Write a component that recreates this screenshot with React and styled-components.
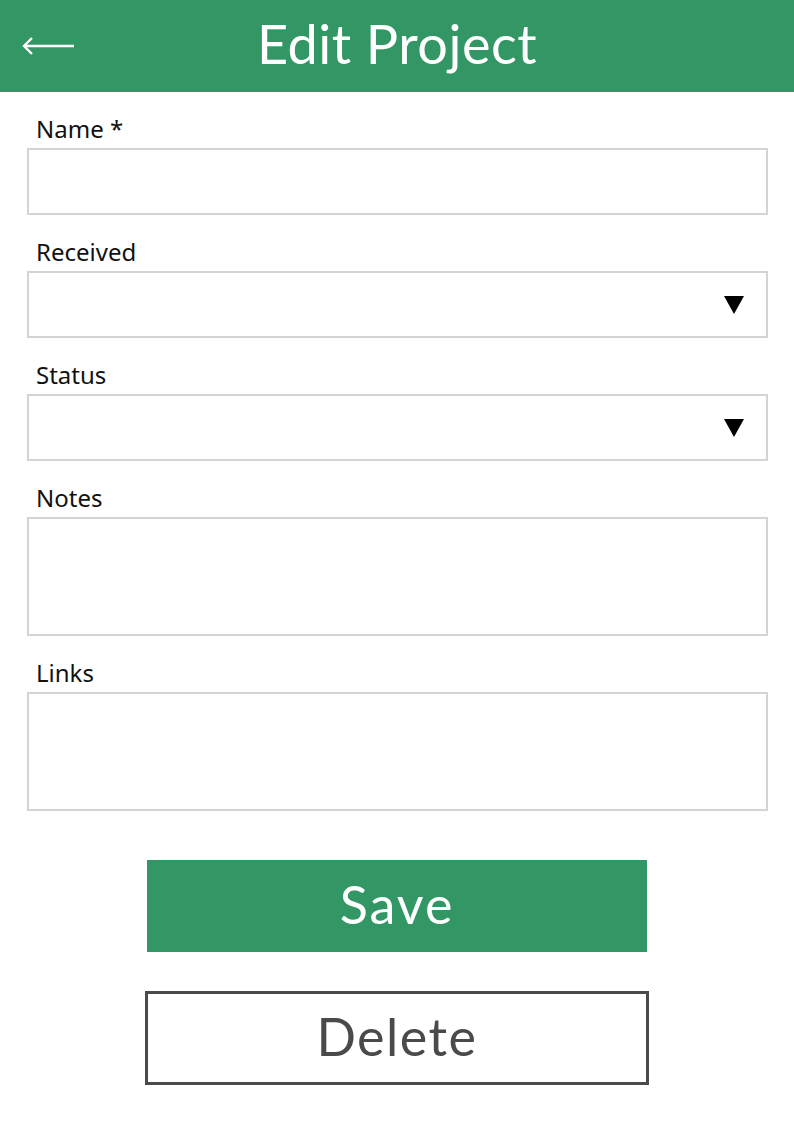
import React from 'react';
import styled, { createGlobalStyle } from 'styled-components';

const GlobalStyle = createGlobalStyle`
    body {
        margin: 0;
        background: #fff;
        font-family: Lato, "Noto Sans", sans-serif;
    }
`;

const Page = styled.div`
    width: 794px;
    min-height: 1123px;
    background: #fff;
`;

const Header = styled.header`
    height: 92px;
    background: #339765;
    display: grid;
    grid-template-columns: 100px 1fr 100px;
    align-items: center;
    color: #fff;
`;

const BackButton = styled.button`
    background: none;
    border: none;
    padding: 0 0 0 22px;
    display: flex;
    align-items: center;
    cursor: pointer;
`;

const Title = styled.h1`
    margin: 0;
    text-align: center;
    font-size: 54px;
    font-weight: 400;
    letter-spacing: 0.5px;
    line-height: 1;
    padding-bottom: 4px;
`;

const Form = styled.form`
    padding: 23px 26px 0 27px;
    display: flex;
    flex-direction: column;
    gap: 23px;
`;

const Field = styled.div`
    display: flex;
    flex-direction: column;
    gap: 5px;
`;

const Label = styled.label`
    font-family: "Noto Sans", Lato, sans-serif;
    font-size: 24px;
    line-height: 28px;
    color: #111;
    padding-left: 9px;
`;

const Box = styled.div`
    box-sizing: border-box;
    height: ${p => p.$tall ? 119 : 67}px;
    border: 2px solid #d4d4d4;
    display: flex;
    align-items: center;
    justify-content: flex-end;
    padding-right: 22px;
`;

const Caret = styled.span`
    width: 0;
    height: 0;
    border-left: 10px solid transparent;
    border-right: 10px solid transparent;
    border-top: 18px solid #000;
`;

const Actions = styled.div`
    display: flex;
    flex-direction: column;
    align-items: center;
    gap: 39px;
    margin-top: 49px;
`;

const Button = styled.button`
    box-sizing: border-box;
    width: ${p => p.$outline ? 504 : 500}px;
    height: ${p => p.$outline ? 94 : 92}px;
    background: ${p => p.$outline ? '#fff' : '#339765'};
    color: ${p => p.$outline ? '#4a4a4a' : '#fff'};
    border: ${p => p.$outline ? '3px solid #4a4a4a' : 'none'};
    font-family: Lato, "Noto Sans", sans-serif;
    font-size: 52px;
    letter-spacing: ${p => p.$outline ? 1.5 : 2}px;
    line-height: 1;
    padding: 0 0 4px;
    cursor: pointer;
`;

const fields = [
    { label: 'Name *' },
    { label: 'Received', select: true },
    { label: 'Status', select: true },
    { label: 'Notes', tall: true },
    { label: 'Links', tall: true },
];

export default function App() {
    return (
        <Page>
            <GlobalStyle />
            <Header>
                <BackButton aria-label="Back">
                    <svg width="54" height="20" viewBox="0 0 54 20">
                        <path d="M2 10 H52 M10 2 L2 10 L10 18" fill="none" stroke="#fff" strokeWidth="2.4" />
                    </svg>
                </BackButton>
                <Title>Edit Project</Title>
                <div />
            </Header>
            <Form onSubmit={e => e.preventDefault()}>
                {fields.map(f => (
                    <Field key={f.label}>
                        <Label>{f.label}</Label>
                        <Box $tall={f.tall}>
                            {f.select && <Caret />}
                        </Box>
                    </Field>
                ))}
            </Form>
            <Actions>
                <Button type="button">Save</Button>
                <Button type="button" $outline>Delete</Button>
            </Actions>
        </Page>
    );
}
